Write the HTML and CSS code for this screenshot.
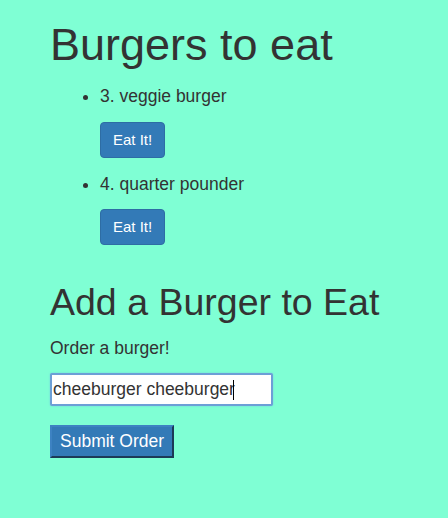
FILE: index.html
```html
<!DOCTYPE html>
<html>
<head>
<meta charset="utf-8">
<link rel="stylesheet" href="styles.css">
</head>
<body>
<div class="container">
  <h1 class="title">Burgers to eat</h1>
  <ul class="burger-list">
    <li class="burger-item">
      <span class="burger-name">3. veggie burger</span>
      <div class="eat-row"><button class="btn-eat">Eat It!</button></div>
    </li>
    <li class="burger-item">
      <span class="burger-name">4. quarter pounder</span>
      <div class="eat-row"><button class="btn-eat">Eat It!</button></div>
    </li>
  </ul>
  <h2 class="subtitle">Add a Burger to Eat</h2>
  <p class="label">Order a burger!</p>
  <div class="field"><input class="burger-input" type="text" value="cheeburger cheeburger"><span class="caret"></span></div>
  <button class="btn-submit">Submit Order</button>
</div>
</body>
</html>
```

FILE: styles.css
```css
html, body {
  margin: 0;
  padding: 0;
  background: #7fffd4;
}
body {
  font-family: "Liberation Sans", Arial, sans-serif;
  color: #333;
  font-size: 17.5px;
  line-height: 25px;
}
.container {
  padding: 20px 0 0 50px;
}
.title {
  margin: 0 0 14px 0;
  font-size: 45px;
  font-weight: 500;
  line-height: 1.1;
}
.burger-list {
  margin: 0;
  padding-left: 50px;
}
.burger-item {
  margin: 0;
}
.eat-row {
  margin: 13px 0 14px 0;
  line-height: 0;
}
.burger-item + .burger-item .eat-row {
  margin-top: 12px;
}
.btn-eat {
  font-family: "Liberation Sans", Arial, sans-serif;
  font-size: 15px;
  line-height: 22px;
  padding: 6px 12px;
  color: #fff;
  background: #337ab7;
  border: 1px solid #2e6da4;
  border-radius: 4px;
}
.subtitle {
  margin: 37px 0 13px 0;
  font-size: 37.5px;
  font-weight: 500;
  line-height: 1.1;
}
.label {
  margin: 0 0 12px 0;
}
.field {
  position: relative;
  width: 223px;
  height: 33px;
}
.burger-input {
  box-sizing: border-box;
  width: 223px;
  height: 33px;
  margin: 0;
  padding: 0 1px;
  border: 2px solid #6d9fd6;
  border-radius: 2px;
  background: #fff;
  color: #333;
  font-family: "Liberation Sans", Arial, sans-serif;
  font-size: 17.5px;
  outline: none;
  box-shadow: 0 0 2px rgba(102, 175, 233, 0.6);
}
.caret {
  position: absolute;
  left: 183px;
  top: 7px;
  width: 1px;
  height: 20px;
  background: #000;
}
.btn-submit {
  margin-top: 19px;
  box-sizing: border-box;
  height: 33px;
  padding: 0 8px;
  font-family: "Liberation Sans", Arial, sans-serif;
  font-size: 17.5px;
  color: #fff;
  background: #337ab7;
  border-width: 2px;
  border-style: solid;
  border-color: #3d82c2 #1c3a57 #1c3a57 #3d82c2;
}
```
